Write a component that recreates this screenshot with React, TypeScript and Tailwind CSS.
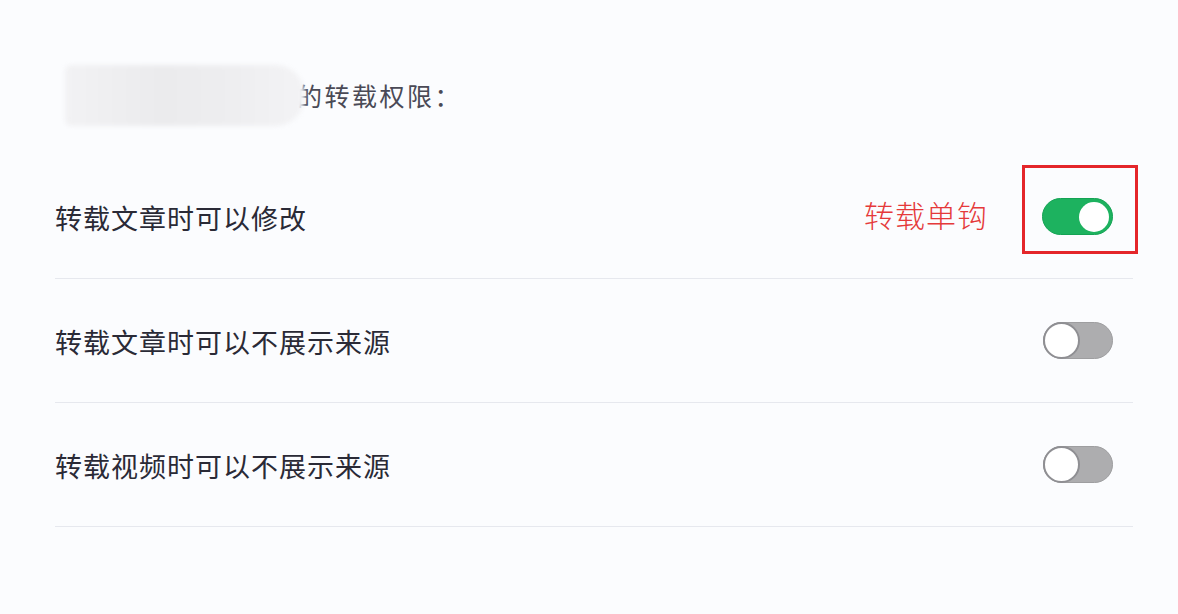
import React from "react";

function Toggle({ on }: { on: boolean }) {
  if (on) {
    return (
      <div className="flex h-[37px] w-[71px] items-center justify-end rounded-full border border-[#14a354] bg-[#1db25f] pr-[3px]">
        <div className="h-[30px] w-[30px] rounded-full bg-white" />
      </div>
    );
  }
  return (
    <div className="flex h-[37px] w-[70px] items-center rounded-full border border-[#9e9ea0] bg-[#adadaf]">
      <div className="-ml-[1px] h-[37px] w-[37px] rounded-full border-[2px] border-[#8f8f93] bg-white" />
    </div>
  );
}

function Row({ label, on, note }: { label: string; on: boolean; note?: boolean }) {
  return (
    <div className="flex h-[124px] items-center justify-between border-b border-[#e6e8ee]">
      <span className="mt-[2px] text-[27px] leading-none tracking-[1px] text-[#2a2a36]">{label}</span>
      <div className="mr-[20px] flex items-center">
        {note && (
          <span className="mr-[54px] -mt-[6px] text-[30px] font-light leading-none tracking-[1px] text-[#e5393a]">转载单钩</span>
        )}
        <div className="relative">
          <Toggle on={on} />
          {note && (
            <div className="absolute -left-[20px] -right-[25px] -top-[33px] -bottom-[19px] border-[3px] border-[#e4262a]" />
          )}
        </div>
      </div>
    </div>
  );
}

export default function App() {
  return (
    <div
      className="h-[614px] w-[1178px] bg-[#fbfcfe] pl-[55px] pr-[45px] pt-[65px]"
      style={{ fontFamily: '"Noto Sans CJK SC", "Noto Sans", sans-serif' }}
    >
      <div className="flex h-[61px] items-center">
        <div className="ml-[10px] h-[61px] w-[240px] rounded-r-[30px] rounded-l-[6px] bg-[linear-gradient(90deg,#f2f2f4_0%,#ebebed_40%,#eeeef0_70%,#f3f3f5_100%)] blur-[2px]" />
        <span className="-ml-[8px] text-[25px] leading-none tracking-[2.5px] text-[#4a4a56]">的转载权限：</span>
      </div>
      <div className="mt-[29px]">
        <Row label="转载文章时可以修改" on note />
        <Row label="转载文章时可以不展示来源" on={false} />
        <Row label="转载视频时可以不展示来源" on={false} />
      </div>
    </div>
  );
}
